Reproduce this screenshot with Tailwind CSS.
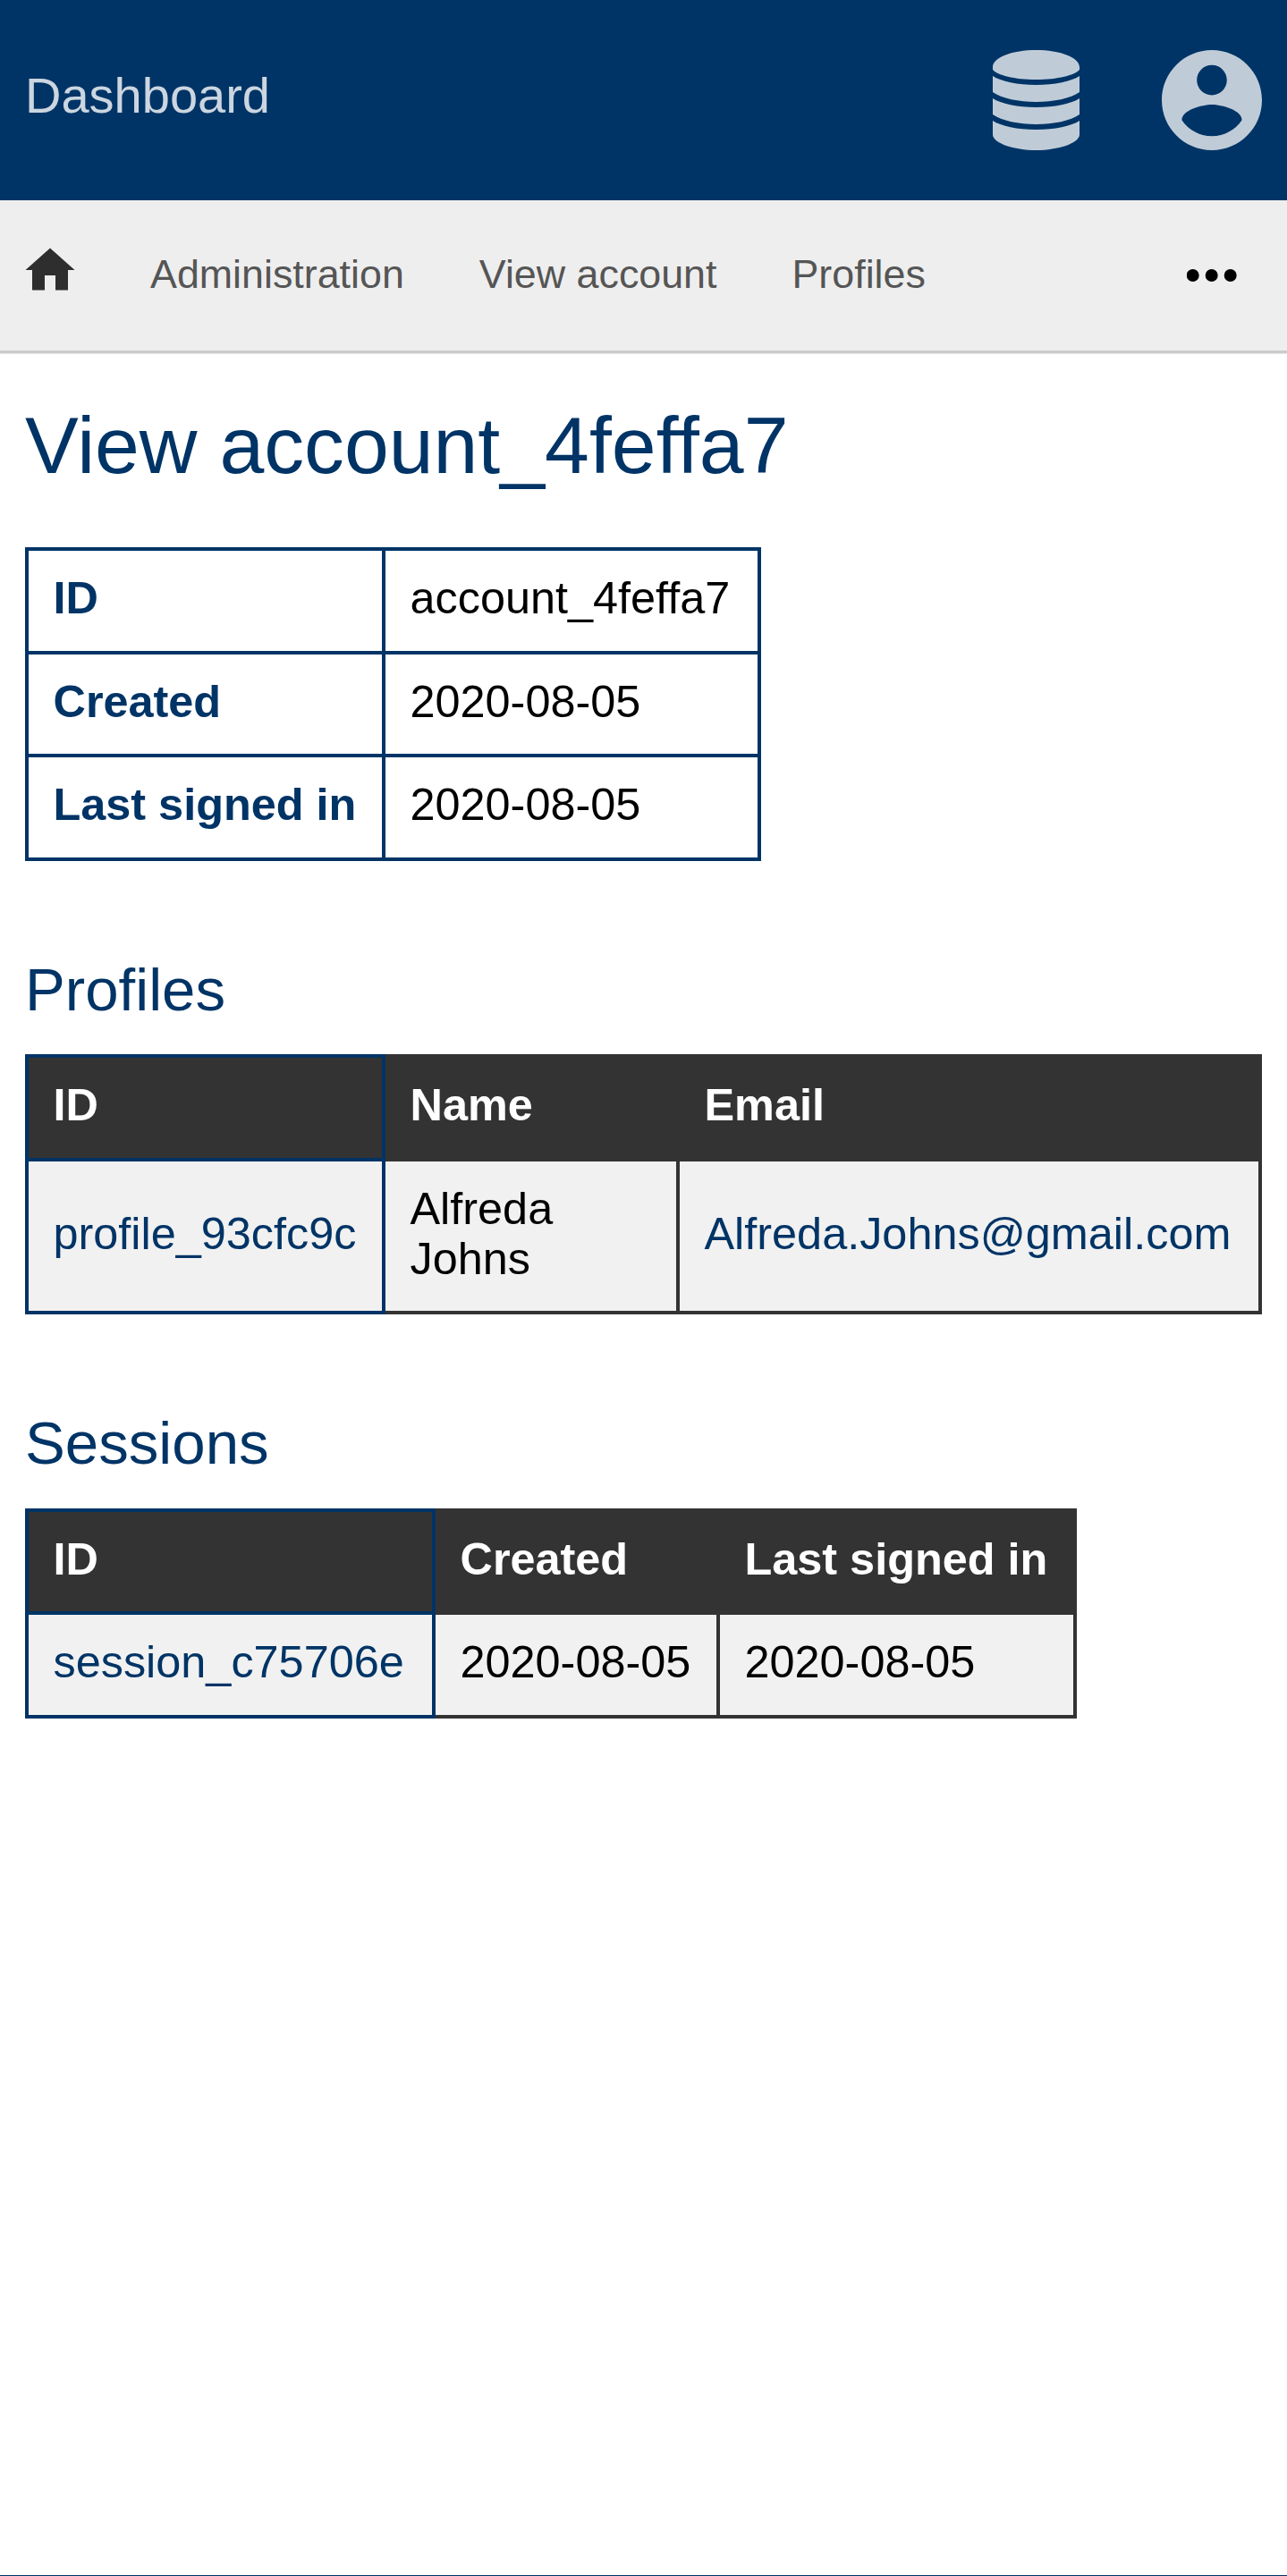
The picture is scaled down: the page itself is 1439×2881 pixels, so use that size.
<!DOCTYPE html>
<html lang="en">
<head>
<meta charset="utf-8">
<title>Dashboard</title>
<script src="https://cdn.jsdelivr.net/npm/@tailwindcss/browser@4"></script>
</head>
<body class="flex min-h-[2881px] flex-col border-b border-[#003466] bg-white font-['Liberation_Sans',sans-serif] text-[50.4px] leading-[56px] text-black">
<header class="flex h-[224px] items-center justify-between bg-[#003466] px-7">
  <a class="-mt-2.5 text-[56px] leading-[64px] text-[#ccd6e0]">Dashboard</a>
  <div class="flex gap-[84px] text-[#bfccd8]">
    <svg class="h-28 w-[112px]" viewBox="0 0 112 112" fill="currentColor"><path d="M7 19C7 8 29 0 55.500 0S104 8 104 19V22C99 28 80 33 55.500 33S12 28 7 22ZM7 29C16 35 35 39 55.500 39S95 35 104 29V47C94 54 75 58 55.500 58S17 54 7 47ZM7 54C16 60 35 64 55.500 64S95 60 104 54V72C94 79 75 83 55.500 83S17 79 7 72ZM7 79C16 85 35 89 55.500 89S95 85 104 79V95C103 104 81 112 55.500 112S8 104 7 95Z"/></svg>
    <svg class="size-28" viewBox="2 2 20 20" fill="currentColor"><path d="M12 2C6.480 2 2 6.480 2 12s4.480 10 10 10 10-4.480 10-10S17.520 2 12 2zm0 3c1.660 0 3 1.340 3 3s-1.340 3-3 3-3-1.340-3-3 1.340-3 3-3zm0 14.200c-2.500 0-4.710-1.280-6-3.220.030-1.990 4-3.080 6-3.080 1.990 0 5.970 1.090 6 3.080-1.290 1.940-3.500 3.220-6 3.220z"/></svg>
  </div>
</header>
<nav class="flex h-[171px] items-center border-b-3 border-[#cbcbcb] bg-[#eeeeee] pl-7 pr-14 text-[44.8px] text-[#555555] shadow-[0_1px_#e5e5e5]">
  <svg class="mr-21 -mt-3.5 h-12 w-14" viewBox="0 0 56 48" fill="#2e2e2e"><path d="M28 .5 55.500 25H48V47.500H34V31H22V47.500H8V25H.5Z"/></svg>
  <a class="mr-21 pb-[5px]">Administration</a>
  <a class="mr-21 pb-[5px]">View account</a>
  <a class="pb-[5px]">Profiles</a>
  <svg class="ml-auto h-14 w-14" viewBox="0 0 56 56" fill="#000"><circle cx="6.700" cy="28" r="7"/><circle cx="27.700" cy="28" r="7"/><circle cx="48.700" cy="28" r="7"/></svg>
</nav>
<main class="px-7">
  <h1 class="mt-[51px] text-[89.6px] leading-[104px] text-[#003466]">View account_4feffa7</h1>
  <table class="mt-[62px] w-[823px] table-fixed border-collapse text-left [&_td]:border-4 [&_td]:border-[#003466] [&_td]:p-0 [&_td]:pb-1.5 [&_td]:pl-[27.5px] [&_th]:border-4 [&_th]:border-[#003466] [&_th]:p-0 [&_th]:pb-1.5 [&_th]:pl-[27.5px] [&_th]:text-[#003466]">
    <colgroup><col class="w-[399px]"><col class="w-[420px]"></colgroup>
    <tr class="h-[116px]"><th>ID</th><td>account_4feffa7</td></tr>
    <tr class="h-[115px]"><th>Created</th><td>2020-08-05</td></tr>
    <tr class="h-[116px]"><th>Last signed in</th><td>2020-08-05</td></tr>
  </table>
  <h2 class="mt-[106px] text-[67.2px] leading-[76px] text-[#003466]">Profiles</h2>
  <table class="mt-[34px] w-[1383px] table-fixed border-collapse bg-[#f1f1f1] text-left [&_td]:border-4 [&_td]:border-[#333333] [&_td]:p-0 [&_td]:pb-1.5 [&_td]:pl-[27.5px] [&_th]:border-4 [&_th]:border-[#333333] [&_th]:bg-[#333333] [&_th]:p-0 [&_th]:pb-1.5 [&_th]:pl-[27.5px] [&_th]:text-white [&_tr>*:first-child]:border-[#003466]">
    <colgroup><col class="w-[399px]"><col class="w-[329px]"><col class="w-[651px]"></colgroup>
    <tr class="h-[116px]"><th>ID</th><th>Name</th><th>Email</th></tr>
    <tr class="h-[171px]"><td class="text-[#003466]">profile_93cfc9c</td><td>Alfreda<br>Johns</td><td class="text-[#003466]">Alfreda.Johns@gmail.com</td></tr>
  </table>
  <h2 class="mt-[106px] text-[67.2px] leading-[76px] text-[#003466]">Sessions</h2>
  <table class="mt-[35px] w-[1176px] table-fixed border-collapse bg-[#f1f1f1] text-left [&_td]:border-4 [&_td]:border-[#333333] [&_td]:p-0 [&_td]:pb-1.5 [&_td]:pl-[27.5px] [&_th]:border-4 [&_th]:border-[#333333] [&_th]:bg-[#333333] [&_th]:p-0 [&_th]:pb-1.5 [&_th]:pl-[27.5px] [&_th]:text-white [&_tr>*:first-child]:border-[#003466]">
    <colgroup><col class="w-[455px]"><col class="w-[318px]"><col class="w-[399px]"></colgroup>
    <tr class="h-[115px]"><th>ID</th><th>Created</th><th>Last signed in</th></tr>
    <tr class="h-[116px]"><td class="text-[#003466]">session_c75706e</td><td>2020-08-05</td><td>2020-08-05</td></tr>
  </table>
</main>
</body>
</html>
